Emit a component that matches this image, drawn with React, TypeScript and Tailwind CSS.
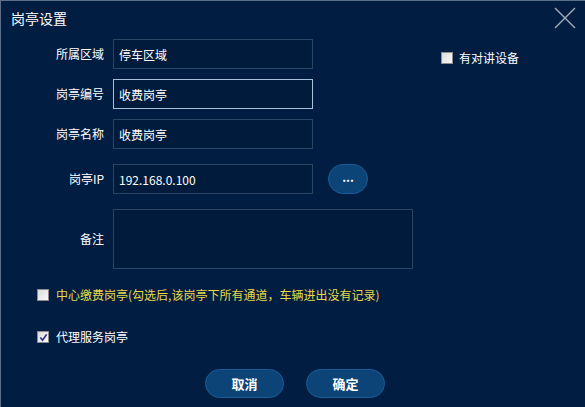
import { useState } from 'react'

const font = { fontFamily: '"Noto Sans CJK SC", "Noto Sans", sans-serif' }

function Box({ checked, onClick }: { checked: boolean; onClick: () => void }) {
    return (
        <span
            onClick={onClick}
            className="w-[12px] h-[12px] border border-[#8d8d8d] bg-gradient-to-br from-[#dcdcdc] to-[#f8f8f8] flex items-center justify-center shrink-0 cursor-pointer"
        >
            {checked && (
                <svg viewBox="0 0 10 10" className="w-[9px] h-[9px]">
                    <path d="M1.5 5 L4 8 L8.5 1.5" fill="none" stroke="#2a2a8c" strokeWidth="1.8" />
                </svg>
            )}
        </span>
    )
}

function Field({ label, value, focus }: { label: string; value: string; focus?: boolean }) {
    return (
        <div className="flex items-center h-[30px]">
            <label className="w-[104px] pr-[1px] text-right text-[12px] text-white">{label}</label>
            <input
                defaultValue={value}
                className={`ml-[8px] w-[200px] h-[30px] px-[5px] bg-[#011b3c] text-[12px] text-white outline-none border ${focus ? 'border-[#a9c0dc]' : 'border-[#2b4463]'}`}
                style={font}
            />
        </div>
    )
}

export default function App() {
    const [intercom, setIntercom] = useState(false)
    const [center, setCenter] = useState(false)
    const [agent, setAgent] = useState(true)

    return (
        <div className="w-[585px] h-[407px] bg-[#011d41] border-t border-l border-[#5b6f88] text-white relative" style={font}>
            <div className="h-[34px] flex items-center pl-[10px] text-[14px]">岗亭设置</div>
            <button className="absolute right-[8px] top-[5px] w-[24px] h-[24px]">
                <svg viewBox="0 0 24 24" className="w-[24px] h-[24px]">
                    <path d="M2 2 L22 22 M22 2 L2 22" stroke="#a7aebb" strokeWidth="1.4" />
                </svg>
            </button>

            <div className="flex">
                <div className="flex flex-col gap-[10px] pt-[4px]">
                    <Field label="所属区域" value="停车区域" />
                    <Field label="岗亭编号" value="收费岗亭" focus />
                    <Field label="岗亭名称" value="收费岗亭" />
                    <div className="flex items-center mt-[5px]">
                        <Field label="岗亭IP" value="192.168.0.100" />
                        <button className="ml-[15px] w-[40px] h-[30px] rounded-full bg-[#0c4478] border border-[#1b5c98] text-[12px] font-bold leading-none pb-[4px]">...</button>
                    </div>
                    <div className="flex items-center mt-[5px]">
                        <label className="w-[104px] pr-[1px] text-right text-[12px]">备注</label>
                        <textarea className="ml-[8px] w-[300px] h-[60px] bg-[#011b3c] border border-[#2b4463] outline-none resize-none text-[12px] p-[4px]" />
                    </div>
                </div>
                <div className="ml-[28px] pt-[14px] flex items-start">
                    <div className="flex items-center gap-[6px] text-[12px] whitespace-nowrap">
                        <Box checked={intercom} onClick={() => setIntercom(!intercom)} />
                        <span>有对讲设备</span>
                    </div>
                </div>
            </div>

            <div className="pl-[36px] mt-[20px] h-[12px] flex items-center gap-[7px] text-[12px] leading-none text-[#e9d84a]">
                <Box checked={center} onClick={() => setCenter(!center)} />
                <span>中心缴费岗亭(勾选后,该岗亭下所有通道，车辆进出没有记录)</span>
            </div>
            <div className="pl-[36px] mt-[30px] h-[12px] flex items-center gap-[7px] text-[12px] leading-none">
                <Box checked={agent} onClick={() => setAgent(!agent)} />
                <span>代理服务岗亭</span>
            </div>

            <div className="flex justify-center gap-[22px] mt-[26px] pl-[4px]">
                <button className="w-[79px] h-[29px] rounded-full bg-[#0c4478] border border-[#1b5c98] text-[13px] font-bold">取消</button>
                <button className="w-[79px] h-[29px] rounded-full bg-[#0c4478] border border-[#1b5c98] text-[13px] font-bold">确定</button>
            </div>
        </div>
    )
}
